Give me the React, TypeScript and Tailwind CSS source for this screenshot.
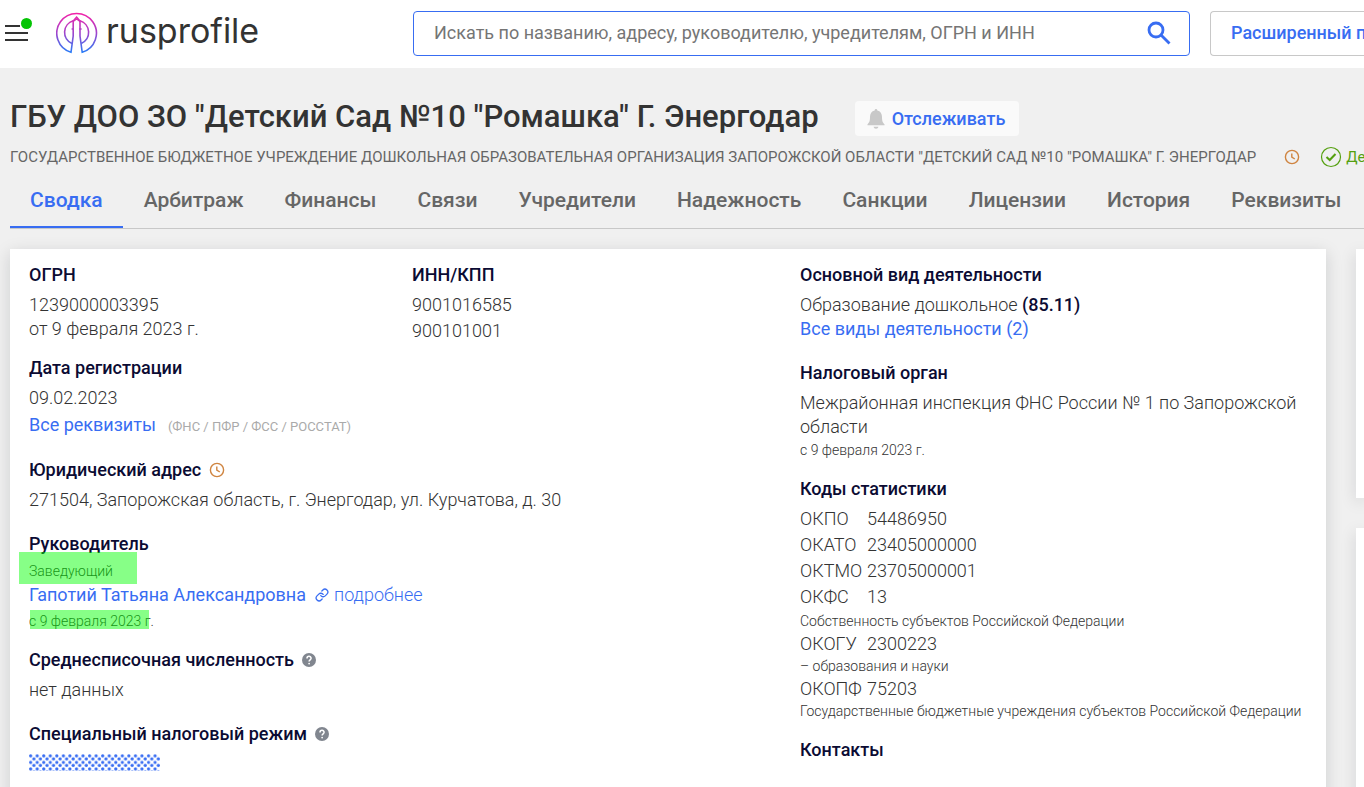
import type { ReactNode } from "react";

const tabs = [
  "Сводка",
  "Арбитраж",
  "Финансы",
  "Связи",
  "Учредители",
  "Надежность",
  "Санкции",
  "Лицензии",
  "История",
  "Реквизиты",
];

const codes = [
  { name: "ОКПО", value: "54486950" },
  { name: "ОКАТО", value: "23405000000" },
  { name: "ОКТМО", value: "23705000001" },
  { name: "ОКФС", value: "13", note: "Собственность субъектов Российской Федерации" },
  { name: "ОКОГУ", value: "2300223", note: "– образования и науки", tight: true },
  {
    name: "ОКОПФ",
    value: "75203",
    note: "Государственные бюджетные учреждения субъектов Российской Федерации",
    tight: true,
  },
];

const Logo = () => (
  <svg viewBox="0 0 42 42" className="h-[42px] w-[42px] shrink-0" fill="none" stroke="url(#logo)" strokeWidth="1.6">
    <defs>
      <linearGradient id="logo" x1="0" y1="0" x2="0" y2="42" gradientUnits="userSpaceOnUse">
        <stop offset="0" stopColor="#f81fa6" />
        <stop offset="0.5" stopColor="#a045cc" />
        <stop offset="1" stopColor="#1f80fa" />
      </linearGradient>
    </defs>
    <path d="M15 40.300 A19.800 19.800 0 1 1 26.200 40.300 L24 24 V9 L20.600 5.200 L17.200 9 V24 Z" />
    <path d="M17.200 8.800 A12 12 0 0 0 16 31.400" />
    <path d="M24 8.800 A12 12 0 0 1 25.200 31.400" />
    <path d="M15.600 17 H18 M23.200 17 H25.600" />
    <path d="M17.200 9.500 L20.600 7 L24 9.500" strokeWidth="1.200" />
  </svg>
);

const ClockIcon = () => (
  <svg viewBox="0 0 16 16" className="h-4 w-4 shrink-0" fill="none" stroke="#cf8440" strokeWidth="1.4">
    <circle cx="8" cy="8" r="6.600" />
    <path d="M7.800 4.500 V8.200 L10.800 10" />
  </svg>
);

const HelpIcon = () => (
  <svg viewBox="0 0 14 14" className="h-[14px] w-[14px] shrink-0">
    <circle cx="7" cy="7" r="7" fill="#81868f" />
    <path d="M5 5.400 C5 2.700 9.100 2.700 9.100 5.300 C9.100 6.900 7.100 6.800 7.100 8.600" fill="none" stroke="#fff" strokeWidth="1.500" />
    <circle cx="7.100" cy="10.600" r="0.900" fill="#fff" />
  </svg>
);

const Heading = ({ children }: { children: ReactNode }) => (
  <h2 className="flex items-center gap-2 text-lg leading-6 font-medium whitespace-nowrap text-[#0b0b33]">
    {children}
  </h2>
);

const Header = () => (
  <header className="flex h-[68px] items-center bg-white pb-[2px]">
    <div className="flex w-[413px] shrink-0 items-center pl-[5px]">
      <button aria-label="Меню" className="relative flex w-[23px] flex-col gap-[5px]">
        <span className="h-[2px] w-[15px] bg-[#333]" />
        <span className="h-[2px] bg-[#333]" />
        <span className="h-[2px] bg-[#333]" />
        <span className="absolute -top-[7px] -right-[4px] h-[11px] w-[11px] rounded-full bg-[#04c404]" />
      </button>
      <a href="/" className="ml-7 flex items-center gap-2">
        <Logo />
        <span className="pb-1 font-[Inter,sans-serif] text-[34px] leading-10 text-[#333]">rusprofile</span>
      </a>
    </div>
    <form className="flex h-[45px] min-w-0 flex-1 items-center rounded border border-[#386df2] pr-[18px] pl-5">
      <input
        type="search"
        aria-label="Поиск"
        placeholder="Искать по названию, адресу, руководителю, учредителям, ОГРН и ИНН"
        className="min-w-0 flex-1 bg-transparent text-lg outline-none placeholder:text-[#757575]"
      />
      <button aria-label="Найти">
        <svg viewBox="0 0 24 24" className="h-6 w-6" fill="none" stroke="#386df2" strokeWidth="2.800">
          <circle cx="9" cy="9" r="7" />
          <path d="M14 14 L22.500 22.500" />
        </svg>
      </button>
    </form>
    <button className="ml-5 h-[45px] w-[154px] shrink-0 overflow-hidden rounded-l border border-r-0 border-[#c8c8c8] pl-5 text-left text-lg font-medium whitespace-nowrap text-[#386df2]">
      Расширенный поиск
    </button>
  </header>
);

const LeftColumn = () => (
  <div>
    <div className="grid grid-cols-[383fr_388fr]">
      <section>
        <Heading>ОГРН</Heading>
        <p className="mt-[6px]">1239000003395</p>
        <p>от 9 февраля 2023 г.</p>
      </section>
      <section>
        <Heading>ИНН/КПП</Heading>
        <p className="mt-[5px] leading-[26px]">9001016585</p>
        <p className="leading-[26px]">900101001</p>
      </section>
    </div>
    <section className="mt-3">
      <Heading>Дата регистрации</Heading>
      <p className="mt-[6px]">09.02.2023</p>
      <p className="leading-[30px]">
        <a href="#requisites" className="font-normal text-[#386df2]">Все реквизиты</a>
        <span className="ml-3 text-[13px] font-normal text-[#aaa]">(ФНС / ПФР / ФСС / РОССТАТ)</span>
      </p>
    </section>
    <section className="mt-4">
      <Heading>
        Юридический адрес <ClockIcon />
      </Heading>
      <p className="mt-[6px]">271504, Запорожская область, г. Энергодар, ул. Курчатова, д. 30</p>
    </section>
    <section className="mt-5">
      <Heading>Руководитель</Heading>
      <p className="relative mt-[6px] text-sm leading-[18px]">
        Заведующий
        <span className="absolute -top-[10px] -left-[10px] h-8 w-[118px] bg-[#00ff00]/47" />
      </p>
      <p className="flex items-center leading-[30px]">
        <a href="#head" className="font-normal text-[#386df2]">Гапотий Татьяна Александровна</a>
        <a href="#more" className="ml-[9px] flex items-center gap-[5px] text-[#386df2]">
          <svg viewBox="0 0 24 24" className="h-[14px] w-[14px]" fill="none" stroke="currentColor" strokeWidth="2.200" strokeLinecap="round">
            <path d="M10 13a5 5 0 0 0 7.540.540l3-3a5 5 0 0 0-7.070-7.070l-1.720 1.710" />
            <path d="M14 11a5 5 0 0 0-7.540-.540l-3 3a5 5 0 0 0 7.070 7.070l1.710-1.710" />
          </svg>
          подробнее
        </a>
      </p>
      <p className="relative text-sm leading-[22px]">
        с 9 февраля 2023 г.
        <span className="absolute top-0 left-[1px] h-[19px] w-[119px] bg-[#00ff00]/47" />
      </p>
    </section>
    <section className="mt-4">
      <Heading>
        Среднесписочная численность <HelpIcon />
      </Heading>
      <p className="mt-[6px]">нет данных</p>
    </section>
    <section className="mt-5">
      <Heading>
        Специальный налоговый режим <HelpIcon />
      </Heading>
      <svg className="mt-2 h-[17px] w-[131px]">
        <defs>
          <pattern id="dots" width="6.550" height="6.550" patternUnits="userSpaceOnUse">
            <circle cx="1.650" cy="1.800" r="1.620" fill="#386df2" />
            <circle cx="4.900" cy="4.900" r="1.620" fill="#386df2" />
          </pattern>
        </defs>
        <rect width="131" height="17" fill="url(#dots)" />
      </svg>
    </section>
  </div>
);

const RightColumn = () => (
  <div>
    <section>
      <Heading>Основной вид деятельности</Heading>
      <p className="mt-[6px]">
        Образование дошкольное <span className="font-medium text-[#0b0b33]">(85.11)</span>
      </p>
      <a href="#activities" className="block font-normal text-[#386df2]">Все виды деятельности (2)</a>
    </section>
    <section className="mt-5">
      <Heading>Налоговый орган</Heading>
      <p className="mt-[6px]">Межрайонная инспекция ФНС России № 1 по Запорожской области</p>
      <p className="text-sm leading-[22px]">с 9 февраля 2023 г.</p>
    </section>
    <section className="mt-4">
      <Heading>Коды статистики</Heading>
      <dl className="mt-[5px]">
        {codes.map((code) => (
          <div key={code.name} className="flex flex-wrap">
            <dt className={`w-[67px] ${code.tight ? "leading-[22px]" : "leading-[26px]"}`}>{code.name}</dt>
            <dd className={code.tight ? "leading-[22px]" : "leading-[26px]"}>{code.value}</dd>
            {code.note && <dd className="w-full text-sm leading-[23px] whitespace-nowrap">{code.note}</dd>}
          </div>
        ))}
      </dl>
    </section>
    <section className="mt-[15px]">
      <Heading>Контакты</Heading>
    </section>
  </div>
);

export default function App() {
  return (
    <div className="h-screen overflow-hidden bg-[#f0f0f0] font-[Roboto,sans-serif] text-[#333]">
      <Header />
      <main className="pl-[10px]">
        <div className="flex h-[77px] items-center gap-9 pt-5 whitespace-nowrap">
          <h1 className="text-[31px] leading-9 font-medium">ГБУ ДОО ЗО "Детский Сад №10 "Ромашка" Г. Энергодар</h1>
          <button className="mt-1 flex h-[35px] w-[164px] items-center gap-[6px] rounded bg-[#fafafa] pl-[11px] text-lg font-medium text-[#386df2]">
            <svg viewBox="0 0 20 22" className="h-[22px] w-5" fill="#c8c8c8">
              <path d="M10 1 C10.800 1 11.300 1.600 11.300 2.400 C14.500 3.100 16 5.500 16 9 C16 13.500 17 14.800 18.500 16.200 V17.300 H1.500 V16.200 C3 14.800 4 13.500 4 9 C4 5.500 5.500 3.100 8.700 2.400 C8.700 1.600 9.200 1 10 1 Z" />
              <path d="M7.600 18.800 H12.400 C12.200 21.400 7.800 21.400 7.600 18.800 Z" />
            </svg>
            Отслеживать
          </button>
        </div>
        <div className="flex h-6 items-center text-[15px] whitespace-nowrap text-[#666]">
          <p>ГОСУДАРСТВЕННОЕ БЮДЖЕТНОЕ УЧРЕЖДЕНИЕ ДОШКОЛЬНАЯ ОБРАЗОВАТЕЛЬНАЯ ОРГАНИЗАЦИЯ ЗАПОРОЖСКОЙ ОБЛАСТИ "ДЕТСКИЙ САД №10 "РОМАШКА" Г. ЭНЕРГОДАР</p>
          <span className="ml-7"><ClockIcon /></span>
          <span className="ml-5 flex items-center gap-1 text-[#55a010]">
            <svg viewBox="0 0 22 22" className="h-[22px] w-[22px]" fill="none" stroke="currentColor">
              <circle cx="11" cy="11" r="9.500" strokeWidth="1.200" />
              <path d="M6.500 11 L9.700 14 L15.500 8" strokeWidth="2" />
            </svg>
            Действует
          </span>
        </div>
        <nav className="flex h-[60px] gap-px border-b border-[#c8c8c8] whitespace-nowrap">
          {tabs.map((tab, i) => (
            <a
              key={tab}
              href="#"
              className={`flex items-center border-b-2 px-5 pt-[6px] text-[21px] font-medium ${
                i === 0 ? "border-[#386df2] text-[#386df2]" : "border-transparent text-[#666]"
              }`}
            >
              {tab}
            </a>
          ))}
        </nav>
        <div className="mt-5 flex gap-[30px]">
          <div className="grid min-w-0 flex-1 grid-cols-[771fr_507fr] bg-white px-[19px] pt-[14px] pb-12 text-lg leading-6 font-light shadow-[0_4px_16px_rgba(0,20,30,0.15)]">
            <LeftColumn />
            <RightColumn />
          </div>
          <aside className="flex w-2 shrink-0 flex-col gap-[30px]">
            <div className="h-[249px] bg-white shadow-[0_4px_16px_rgba(0,20,30,0.15)]" />
            <div className="flex-1 bg-white shadow-[0_4px_16px_rgba(0,20,30,0.15)]" />
          </aside>
        </div>
      </main>
    </div>
  );
}
